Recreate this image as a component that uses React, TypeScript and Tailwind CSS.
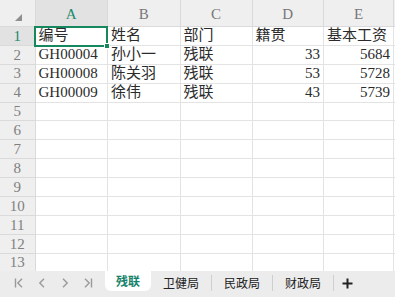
import React from "react"

const COLS = ["A", "B", "C", "D", "E"]
const WIDTHS = ["w-[72.5px]", "w-[72.5px]", "w-[72px]", "w-[71.5px]", "w-[70px]"]

type Cell = { v: string; num?: boolean }

const DATA: Cell[][] = [
  [{ v: "编号" }, { v: "姓名" }, { v: "部门" }, { v: "籍贯" }, { v: "基本工资" }],
  [{ v: "GH00004" }, { v: "孙小一" }, { v: "残联" }, { v: "33", num: true }, { v: "5684", num: true }],
  [{ v: "GH00008" }, { v: "陈关羽" }, { v: "残联" }, { v: "53", num: true }, { v: "5728", num: true }],
  [{ v: "GH00009" }, { v: "徐伟" }, { v: "残联" }, { v: "43", num: true }, { v: "5739", num: true }],
]

const cellFont = "font-['Liberation_Serif','Noto_Sans_CJK_SC',serif]"

function NavIcons() {
  return (
    <div className="flex items-center gap-[13px] pl-[14px] pr-[12px] text-[#9a9a9a]">
      <svg width="10" height="12" viewBox="0 0 10 12" fill="none" stroke="currentColor" strokeWidth="1.4">
        <path d="M1.5 1.5v9M8 1.8 3.8 6 8 10.2" />
      </svg>
      <svg width="10" height="12" viewBox="0 0 10 12" fill="none" stroke="currentColor" strokeWidth="1.4">
        <path d="M7 1.8 2.8 6 7 10.2" />
      </svg>
      <svg width="10" height="12" viewBox="0 0 10 12" fill="none" stroke="currentColor" strokeWidth="1.4">
        <path d="M3 1.8 7.2 6 3 10.2" />
      </svg>
      <svg width="10" height="12" viewBox="0 0 10 12" fill="none" stroke="currentColor" strokeWidth="1.4">
        <path d="M2 1.8 6.2 6 2 10.2M8.5 1.5v9" />
      </svg>
    </div>
  )
}

export default function App() {
  const rows = Array.from({ length: 13 }, (_, i) => i)

  return (
    <div className="flex h-[297px] w-[395px] flex-col overflow-hidden bg-white">
      <div className="relative flex-1 overflow-hidden">
        {/* column header */}
        <div className="flex h-[27px] bg-[#efefef]">
          <div className="relative w-[35.5px] shrink-0 border-r border-b border-[#dadada]">
            <svg className="absolute top-[14px] left-[15px]" width="7" height="7" viewBox="0 0 7 7">
              <path d="M7 0V7H0Z" fill="#8f8f8f" />
            </svg>
          </div>
          {COLS.map((c, i) => (
            <div
              key={c}
              className={`${WIDTHS[i]} flex shrink-0 items-center justify-center border-r border-b border-[#dadada] pt-[3px] text-[15px] ${cellFont} ${
                i === 0 ? "bg-[#e2e2e2] text-[#1b8a6c]" : "text-[#777]"
              }`}
            >
              {c}
            </div>
          ))}
          <div className="flex-1 border-b border-[#dadada]" />
        </div>

        {rows.map((r) => {
          const row = DATA[r]
          return (
            <div key={r} className="flex h-[18.9px]">
              <div
                className={`flex w-[35.5px] shrink-0 items-center justify-center border-r border-b border-[#dadada] text-[15px] ${cellFont} ${
                  r === 0 ? "bg-[#e2e2e2] text-[#1b8a6c]" : "bg-[#efefef] text-[#808080]"
                }`}
              >
                {r + 1}
              </div>
              {COLS.map((c, i) => {
                const cell = row?.[i]
                return (
                  <div
                    key={c}
                    className={`${WIDTHS[i]} flex shrink-0 items-center overflow-hidden border-r border-b border-[#e3e3e3] px-[3px] text-[15px] leading-none whitespace-nowrap text-[#2b2b2b] ${cellFont} ${
                      cell?.num ? "justify-end" : ""
                    }`}
                  >
                    {cell?.v}
                  </div>
                )
              })}
              <div className="flex-1 border-b border-[#e3e3e3]" />
            </div>
          )
        })}

        {/* selection on A1 */}
        <div className="absolute top-[26px] left-[34px] h-[20.5px] w-[74px] border-2 border-[#17875e]">
          <div className="absolute -right-[4px] -bottom-[4px] h-[6px] w-[6px] border border-white bg-[#17875e]" />
        </div>
      </div>

      {/* sheet tabs */}
      <div className="flex h-[26px] shrink-0 items-start bg-[#ececec] font-['Noto_Sans_CJK_SC',sans-serif] text-[12px] text-[#222]">
        <div className="flex h-[24px] items-center">
          <NavIcons />
        </div>
        <div className="flex h-[20px] w-[46px] items-center justify-center rounded-b-[6px] bg-white font-bold text-[#16826a]">
          残联
        </div>
        {["卫健局", "民政局", "财政局"].map((t) => (
          <div key={t} className="flex h-[24px] items-center">
            <div className="flex w-[60px] items-center justify-center">{t}</div>
            <div className="h-[16px] w-px bg-[#cfcfcf]" />
          </div>
        ))}
        <div className="flex h-[24px] items-center pl-[8px]">
          <svg width="11" height="11" viewBox="0 0 11 11">
            <path d="M5.5 0.5v10M0.5 5.5h10" stroke="#222" strokeWidth="2" />
          </svg>
        </div>
      </div>
    </div>
  )
}
